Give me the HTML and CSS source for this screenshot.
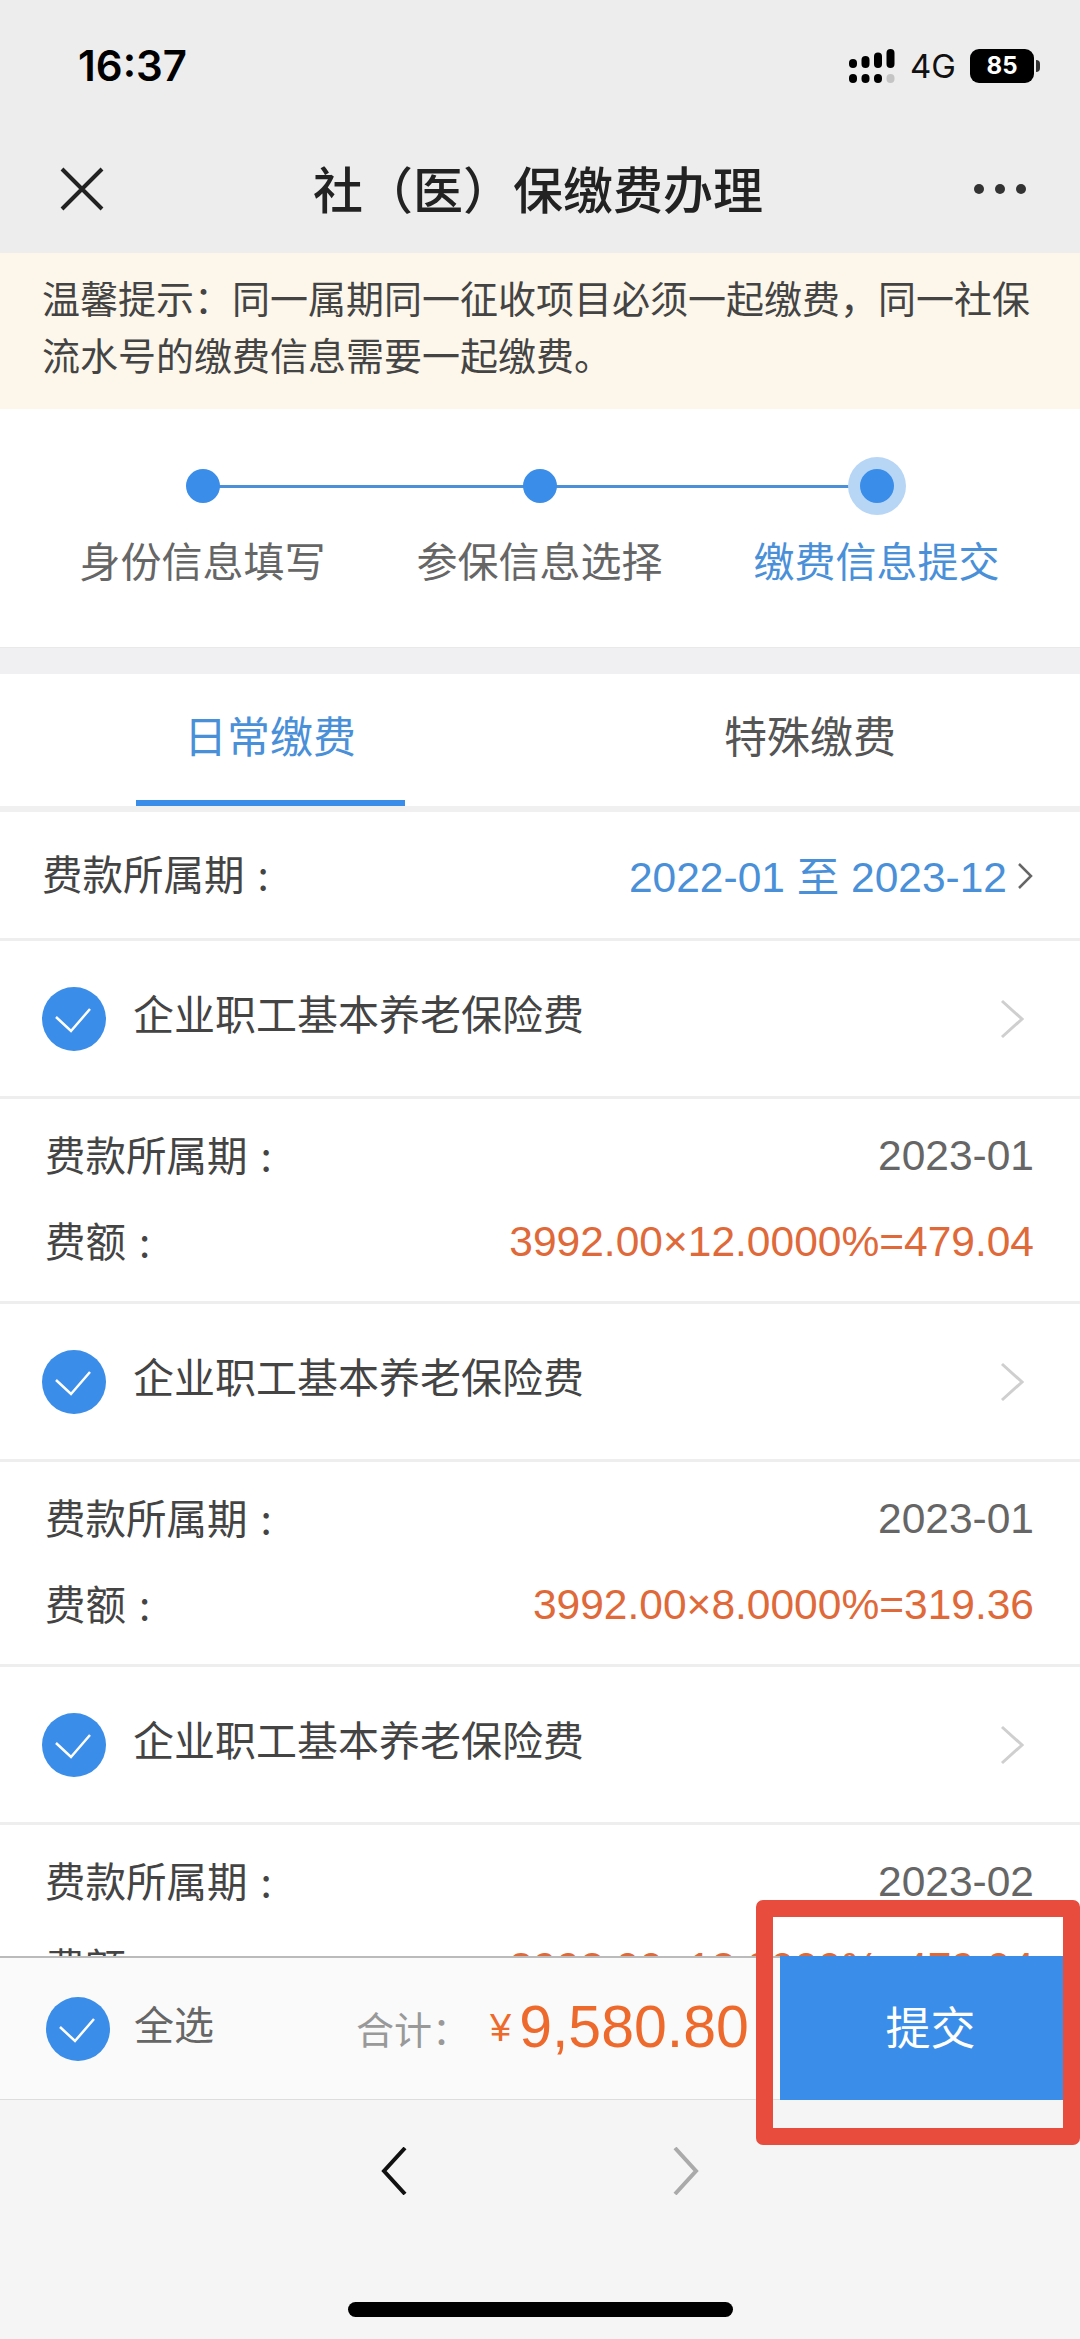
FILE: index.html
```html
<!DOCTYPE html>
<html lang="zh-CN">
<head>
  <meta charset="UTF-8" />
  <meta name="viewport" content="width=device-width, initial-scale=1.0"/>
  <title>社（医）保缴费办理</title>
  <link rel="stylesheet" href="styles.css">
</head>
<body>
  <div class="page">

    <header class="top">
      <div class="status">
        <span class="time">16:37</span>
        <div class="status-right">
          <svg class="signal" width="46" height="34" viewBox="0 0 46 34">
            <g fill="#000">
              <rect x="0" y="10" width="8" height="9" rx="4"/>
              <rect x="12.500" y="7" width="8" height="12" rx="4"/>
              <rect x="25" y="3.500" width="8" height="15.500" rx="4"/>
              <rect x="37.500" y="0" width="8" height="19" rx="4"/>
              <rect x="0" y="25" width="8" height="9" rx="4"/>
              <rect x="12.500" y="25" width="8" height="9" rx="4"/>
              <rect x="25" y="25" width="8" height="9" rx="4"/>
              <rect x="37.500" y="25" width="8" height="9" rx="4" fill="#c4c4c4"/>
            </g>
          </svg>
          <span class="net">4G</span>
          <span class="battery">85</span>
          <span class="battery-tip"></span>
        </div>
      </div>
      <div class="nav">
        <svg class="nav-close" width="44" height="44" viewBox="0 0 44 44">
          <path d="M2 2 L42 42 M42 2 L2 42" stroke="#222" stroke-width="4" fill="none"/>
        </svg>
        <h1>社（医）保缴费办理</h1>
        <div class="dots"><i></i><i></i><i></i></div>
      </div>
    </header>

    <div class="notice">温馨提示：同一属期同一征收项目必须一起缴费，同一社保流水号的缴费信息需要一起缴费。</div>

    <section class="steps">
      <div class="step">
        <span class="dot"></span>
        <span class="step-label">身份信息填写</span>
      </div>
      <div class="step">
        <span class="dot"></span>
        <span class="step-label">参保信息选择</span>
      </div>
      <div class="step current">
        <span class="dot"></span>
        <span class="step-label">缴费信息提交</span>
      </div>
    </section>

    <nav class="tabs">
      <div class="tab active"><span>日常缴费</span></div>
      <div class="tab"><span>特殊缴费</span></div>
    </nav>

    <main class="list">
      <div class="period">
        <span class="label">费款所属期 :</span>
        <span class="period-value">2022-01 至 2023-12
          <svg width="18" height="28" viewBox="0 0 18 28"><path d="M3 2 L15 14 L3 26" stroke="#666" stroke-width="2.500" fill="none"/></svg>
        </span>
      </div>

      <div class="item-head">
        <svg class="check" width="64" height="64" viewBox="0 0 64 64"><circle cx="32" cy="32" r="32" fill="#3a8de8"/><path d="M14 30 L29 44 L48 22" stroke="#fff" stroke-width="2.500" fill="none"/></svg>
        <span class="item-title">企业职工基本养老保险费</span>
        <svg class="item-arrow" width="24" height="40" viewBox="0 0 24 40"><path d="M2 2 L22 20 L2 38" stroke="#cfcfcf" stroke-width="3" fill="none"/></svg>
      </div>
      <div class="item-body">
        <div class="line"><span class="label">费款所属期 :</span><span class="date">2023-01</span></div>
        <div class="line"><span class="label">费额 :</span><span class="fee">3992.00×12.0000%=479.04</span></div>
      </div>

      <div class="item-head">
        <svg class="check" width="64" height="64" viewBox="0 0 64 64"><circle cx="32" cy="32" r="32" fill="#3a8de8"/><path d="M14 30 L29 44 L48 22" stroke="#fff" stroke-width="2.500" fill="none"/></svg>
        <span class="item-title">企业职工基本养老保险费</span>
        <svg class="item-arrow" width="24" height="40" viewBox="0 0 24 40"><path d="M2 2 L22 20 L2 38" stroke="#cfcfcf" stroke-width="3" fill="none"/></svg>
      </div>
      <div class="item-body">
        <div class="line"><span class="label">费款所属期 :</span><span class="date">2023-01</span></div>
        <div class="line"><span class="label">费额 :</span><span class="fee">3992.00×8.0000%=319.36</span></div>
      </div>

      <div class="item-head">
        <svg class="check" width="64" height="64" viewBox="0 0 64 64"><circle cx="32" cy="32" r="32" fill="#3a8de8"/><path d="M14 30 L29 44 L48 22" stroke="#fff" stroke-width="2.500" fill="none"/></svg>
        <span class="item-title">企业职工基本养老保险费</span>
        <svg class="item-arrow" width="24" height="40" viewBox="0 0 24 40"><path d="M2 2 L22 20 L2 38" stroke="#cfcfcf" stroke-width="3" fill="none"/></svg>
      </div>
      <div class="item-body">
        <div class="line"><span class="label">费款所属期 :</span><span class="date">2023-02</span></div>
        <div class="line"><span class="label">费额 :</span><span class="fee">3992.00×12.0000%=479.04</span></div>
      </div>
    </main>

    <div class="bar">
      <svg class="check" width="64" height="64" viewBox="0 0 64 64"><circle cx="32" cy="32" r="32" fill="#3a8de8"/><path d="M14 30 L29 44 L48 22" stroke="#fff" stroke-width="2.500" fill="none"/></svg>
      <span class="select-all">全选</span>
      <span class="total-label">合计：</span>
      <span class="yen">¥</span>
      <span class="total">9,580.80</span>
      <button class="submit">提交</button>
    </div>

    <footer class="browser">
      <div class="browser-nav">
        <svg width="26" height="48" viewBox="0 0 26 48"><path d="M24 1 L3 24 L24 47" stroke="#111" stroke-width="4" fill="none"/></svg>
        <svg width="26" height="48" viewBox="0 0 26 48"><path d="M2 1 L23 24 L2 47" stroke="#aaa" stroke-width="4" fill="none"/></svg>
      </div>
      <div class="home-bar"></div>
    </footer>

    <!-- red box drawn over the screenshot -->
    <div class="mark"></div>
  </div>
</body>
</html>
```

FILE: styles.css
```css
* { margin: 0; padding: 0; box-sizing: border-box; }

body {
  background: #fff;
  color: #444;
  font-family: 'Noto Sans CJK SC', 'Noto Sans', sans-serif;
}

.page {
  position: relative;
  width: 1080px;
  height: 2339px;
  display: flex;
  flex-direction: column;
  overflow: hidden;
  background: #f0f0f2;
}

/* top bar */
.top {
  background: #ededed;
  height: 253px;
  flex-shrink: 0;
}

.status {
  height: 131px;
  padding: 40px 40px 0 78px;
  display: flex;
  justify-content: space-between;
  align-items: flex-start;
}

.time {
  font-family: 'Inter', sans-serif;
  font-size: 42px;
  line-height: 52px;
  font-weight: 600;
  color: #000;
}

.status-right {
  display: flex;
  align-items: center;
  height: 40px;
  margin-top: 6px;
}

.signal { margin-right: 15px; }

.net {
  font-family: 'Inter', sans-serif;
  font-size: 33px;
  font-weight: 400;
  color: #111;
  margin-right: 14px;
}

.battery {
  width: 64px;
  height: 34px;
  background: #000;
  color: #fff;
  border-radius: 9px;
  font-family: 'Inter', sans-serif;
  font-size: 24px;
  font-weight: 700;
  line-height: 34px;
  text-align: center;
}

.battery-tip {
  width: 4px;
  height: 12px;
  margin-left: 2px;
  background: #333;
  border-radius: 0 4px 4px 0;
}

.nav {
  height: 122px;
  display: grid;
  grid-template-columns: 1fr auto 1fr;
  align-items: center;
  padding: 0 54px 6px 60px;
}

.nav-close { display: block; }

.nav h1 {
  margin: 0 0 4px -10px;
  font-size: 50px;
  font-weight: 500;
  color: #222;
}

.dots {
  display: flex;
  gap: 11px;
  justify-self: end;
}

.dots i {
  width: 10px;
  height: 10px;
  border-radius: 50%;
  background: #333;
}

/* notice */
.notice {
  background: #fdf7eb;
  height: 156px;
  flex-shrink: 0;
  padding: 15px 28px 0 42px;
  font-size: 38px;
  line-height: 57px;
  color: #444;
}

/* steps */
.steps {
  height: 239px;
  flex-shrink: 0;
  display: flex;
  padding: 60px 0 0 34px;
  background: #fff;
  border-bottom: 1px solid #e9e9e9;
}

.step {
  position: relative;
  width: 337px;
  display: flex;
  flex-direction: column;
  align-items: center;
  gap: 26px;
  font-size: 41px;
  color: #666;
}

.step:not(:last-child)::after {
  content: "";
  position: absolute;
  top: 16px;
  left: 168px;
  width: 337px;
  height: 3px;
  background: #4a8fd8;
}

.dot {
  position: relative;
  z-index: 1;
  width: 34px;
  height: 34px;
  border-radius: 50%;
  background: #3a8de8;
}

.current { color: #4a90d9; }

.current .dot { box-shadow: 0 0 0 12px #b7d6f6; }

/* tabs */
.tabs {
  margin-top: 26px;
  height: 138px;
  flex-shrink: 0;
  display: flex;
  background: #fff;
  border-bottom: 6px solid #f0f0f0;
}

.tab {
  flex: 1;
  display: flex;
  justify-content: center;
  font-size: 43px;
  color: #555;
}

.tab span {
  width: 269px;
  padding-top: 29px;
  line-height: 62px;
  text-align: center;
}

.tab.active { color: #4a90d9; }

.tab.active span { border-bottom: 6px solid #3a8de8; }

/* list */
.list {
  flex: 1;
  min-height: 0;
  overflow: hidden;
  background: #fff;
}

.label {
  margin-bottom: 6px;
  word-spacing: 4px;
}

.period {
  height: 129px;
  padding: 0 46px 0 42px;
  display: flex;
  align-items: center;
  justify-content: space-between;
  font-size: 40.500px;
  border-bottom: 3px solid #eee;
}

.period-value {
  margin-bottom: 4px;
  font-family: 'Liberation Sans', 'Noto Sans CJK SC', sans-serif;
  font-size: 42.500px;
  color: #4a90d9;
  display: flex;
  align-items: center;
  gap: 9px;
}

.period-value svg { margin-top: 6px; }

.item-head {
  height: 158px;
  padding: 0 56px 0 42px;
  display: flex;
  align-items: center;
  border-bottom: 3px solid #eee;
}

.item-title {
  margin-left: 27px;
  margin-bottom: 14px;
  flex: 1;
  font-size: 41px;
  color: #444;
}

.item-body {
  height: 205px;
  padding: 14px 46px 0 45px;
  border-bottom: 3px solid #eee;
}

.line {
  height: 86px;
  display: flex;
  align-items: center;
  justify-content: space-between;
  font-size: 40.500px;
}

.date {
  font-family: 'Liberation Sans', sans-serif;
  font-size: 42.500px;
  color: #666;
}

.fee {
  font-family: 'Liberation Sans', sans-serif;
  font-size: 42.500px;
  color: #e0693a;
}

/* bottom bar */
.bar {
  position: relative;
  height: 144px;
  flex-shrink: 0;
  display: flex;
  align-items: center;
  padding-left: 46px;
  background: #fafafa;
  border-top: 2px solid #bbb;
  border-bottom: 1px solid #ddd;
}

.select-all {
  margin-left: 24px;
  margin-bottom: 12px;
  font-size: 40px;
  color: #666;
}

.total-label {
  margin-left: 142px;
  margin-bottom: 2px;
  font-size: 38px;
  color: #999;
}

.yen {
  margin-left: 20px;
  font-family: 'Liberation Sans', sans-serif;
  font-size: 38px;
  color: #ee6a2c;
}

.total {
  margin-left: 8px;
  margin-bottom: 4px;
  font-family: 'Liberation Sans', sans-serif;
  font-size: 59px;
  color: #ee6a2c;
}

.submit {
  position: absolute;
  right: 17px;
  top: -2px;
  width: 283px;
  height: 144px;
  padding: 0 0 6px 18px;
  border: none;
  background: #3a8de8;
  color: #fff;
  font-family: inherit;
  font-size: 45px;
}

/* browser controls */
.browser {
  height: 239px;
  flex-shrink: 0;
  background: #f5f5f5;
  display: flex;
  flex-direction: column;
  align-items: center;
}

.browser-nav {
  display: flex;
  gap: 266px;
  margin-top: 47px;
}

.home-bar {
  width: 385px;
  height: 15px;
  margin-top: 107px;
  border-radius: 8px;
  background: #000;
}

/* annotation */
.mark {
  position: absolute;
  left: 756px;
  top: 1900px;
  width: 324px;
  height: 245px;
  border: 17px solid #e74c3c;
  border-radius: 7px;
}
```
